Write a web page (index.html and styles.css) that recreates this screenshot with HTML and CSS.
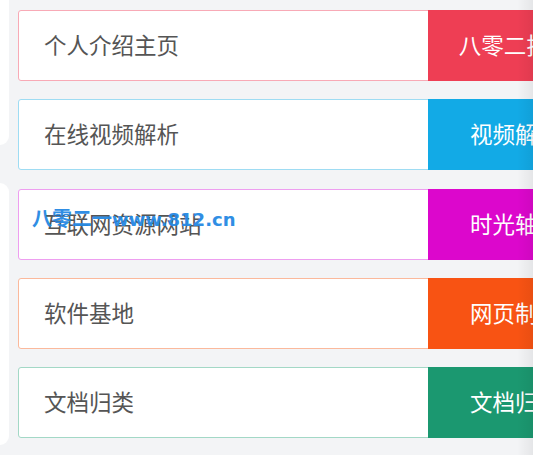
FILE: index.html
```html
<!DOCTYPE html>
<html lang="zh-CN">
<head>
<meta charset="utf-8">
<title>导航</title>
<link rel="stylesheet" href="styles.css">
</head>
<body>
<div class="layout">
  <aside class="sidebar">
    <div class="panel panel-top"></div>
    <div class="panel panel-bottom"></div>
  </aside>
  <main class="list">
    <a class="card card-red" href="#">
      <span class="label">个人介绍主页</span>
      <span class="tag">八零二拾网</span>
    </a>
    <a class="card card-blue" href="#">
      <span class="label">在线视频解析</span>
      <span class="tag">视频解析</span>
    </a>
    <a class="card card-magenta" href="#">
      <span class="label">互联网资源网站</span>
      <span class="tag">时光轴记</span>
    </a>
    <a class="card card-orange" href="#">
      <span class="label">软件基地</span>
      <span class="tag">网页制作</span>
    </a>
    <a class="card card-green" href="#">
      <span class="label">文档归类</span>
      <span class="tag">文档归类</span>
    </a>
  </main>
</div>
<div class="watermark"><span class="wm-cn">八零二一</span><span class="wm-en">www.812.cn</span></div>
<div class="edge-shade"></div>
</body>
</html>
```

FILE: styles.css
```css
html, body {
  margin: 0;
  padding: 0;
  overflow: hidden;
}

body {
  background: #f3f4f6;
  font-family: "Noto Sans CJK SC", "Noto Sans", sans-serif;
  width: 533px;
  height: 455px;
  position: relative;
}

.layout {
  display: grid;
  grid-template-columns: 9px 584px;
  column-gap: 9px;
}

.sidebar {
  display: flex;
  flex-direction: column;
  gap: 38px;
}

.panel {
  background: #ffffff;
}

.panel-top {
  height: 145px;
  border-radius: 0 0 10px 0;
}

.panel-bottom {
  height: 262px;
  border-radius: 0 10px 10px 0;
}

.list {
  display: flex;
  flex-direction: column;
  gap: 18.25px;
  padding-top: 10px;
}

.card {
  display: flex;
  height: 71px;
  box-sizing: border-box;
  border: 1px solid #ddd;
  border-radius: 3px;
  background: #ffffff;
  text-decoration: none;
}

.label {
  flex: 1;
  display: flex;
  align-items: center;
  padding-left: 25px;
  padding-bottom: 3px;
  font-size: 22.5px;
  color: #555555;
}

.tag {
  width: 174px;
  margin: -1px -1px -1px 0;
  display: flex;
  align-items: center;
  justify-content: center;
  padding-bottom: 3px;
  box-sizing: border-box;
  font-size: 22.5px;
  color: #ffffff;
  white-space: nowrap;
}

.card-red { border-color: #f8aab6; }
.card-red .tag { background: #ee3e54; }

.card-blue { border-color: #9edcf3; }
.card-blue .tag { background: #12aae6; }

.card-magenta { border-color: #ee9ef0; }
.card-magenta .tag { background: #dc07cc; }

.card-orange { border-color: #fbb99c; }
.card-orange .tag { background: #f85313; }

.card-green { border-color: #a3d8c6; }
.card-green .tag { background: #1b9870; }

.watermark {
  position: absolute;
  left: 32px;
  top: 203px;
  color: #2589e3;
  font-weight: bold;
  white-space: nowrap;
  display: flex;
  align-items: baseline;
  opacity: 0.95;
}

.wm-cn {
  font-family: "Noto Sans CJK SC", sans-serif;
  font-size: 20px;
}

.wm-en {
  font-family: "DejaVu Sans", sans-serif;
  font-size: 18px;
}

.edge-shade {
  position: absolute;
  top: 0;
  right: 0;
  width: 16px;
  height: 100%;
  background: linear-gradient(to right, rgba(0, 0, 0, 0), rgba(0, 0, 0, 0.06));
  pointer-events: none;
}
```
